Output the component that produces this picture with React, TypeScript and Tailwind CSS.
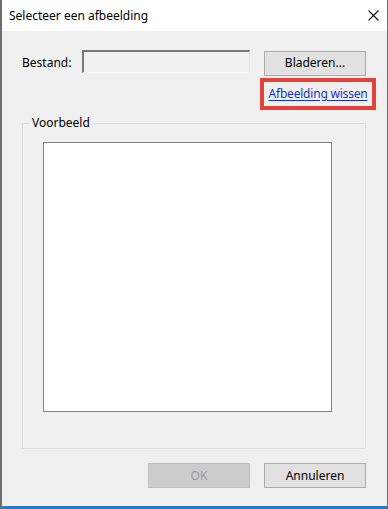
import React from 'react';

const font = { fontFamily: '"Noto Sans", "Open Sans", sans-serif' };

function WinButton({ children, disabled }: { children: React.ReactNode; disabled?: boolean }) {
  return (
    <button
      disabled={disabled}
      className={
        disabled
          ? 'w-[102px] h-[25px] border border-[#bfbfbf] bg-[#cccccc] text-[#9a9a9a] text-[12px] leading-none'
          : 'w-[102px] h-[25px] border border-[#adadad] bg-[#e1e1e1] text-black text-[12px] leading-none'
      }
    >
      {children}
    </button>
  );
}

export default function App() {
  return (
    <div
      className="w-[388px] h-[509px] flex flex-col bg-[#f0f0f0] border-l-2 border-r border-[#6f6f6f] text-black"
      style={font}
    >
      {/* title bar */}
      <div className="h-[31px] bg-white flex items-center justify-between pl-[7px] pr-[8px] shrink-0">
        <span className="text-[12px] leading-none">Selecteer een afbeelding</span>
        <svg width="11" height="11" viewBox="0 0 11 11">
          <path d="M0.5 0.5 L10.5 10.5 M10.5 0.5 L0.5 10.5" stroke="#111" strokeWidth="1.1" fill="none" />
        </svg>
      </div>

      <div className="flex flex-col pl-[20px] pr-[21px]">
        {/* file row */}
        <div className="flex items-start mt-[18px] h-[24px]">
          <span className="text-[12px] leading-none w-[60px] mt-[8px]">Bestand:</span>
          <div className="w-[168px] h-[23px] mt-[1px] bg-[#f0f0f0] border-t-2 border-l-2 border-t-[#7a7a7a] border-l-[#7a7a7a] border-r border-b border-r-[#e3e3e3] border-b-[#fbfbfb]" />
          <div className="ml-auto">
            <WinButton>Bladeren...</WinButton>
          </div>
        </div>

        {/* clear link */}
        <div className="flex justify-end mt-[5px] -mr-[10px]">
          <div className="w-[116px] h-[32px] border-4 border-[#e5413b] flex items-center justify-center">
            <a href="#" className="text-[12px] leading-none text-[#1433cc] underline underline-offset-2 tracking-[-0.2px]">
              Afbeelding wissen
            </a>
          </div>
        </div>

        {/* preview group */}
        <fieldset className="mt-[5px] h-[334px] border border-[#dcdcdc] pt-[11px]">
          <legend className="ml-[7px] px-[2px] text-[12px] leading-[16px]">Voorbeeld</legend>
          <div className="ml-[20px] w-[289px] h-[270px] bg-white border border-[#828282]" />
        </fieldset>

        {/* buttons */}
        <div className="flex justify-end gap-[14px] mt-[14px]">
          <WinButton disabled>OK</WinButton>
          <WinButton>Annuleren</WinButton>
        </div>
      </div>

      <div className="flex-1" />
      <div className="h-[3px] bg-[#2b79c4] shrink-0" />
    </div>
  );
}
